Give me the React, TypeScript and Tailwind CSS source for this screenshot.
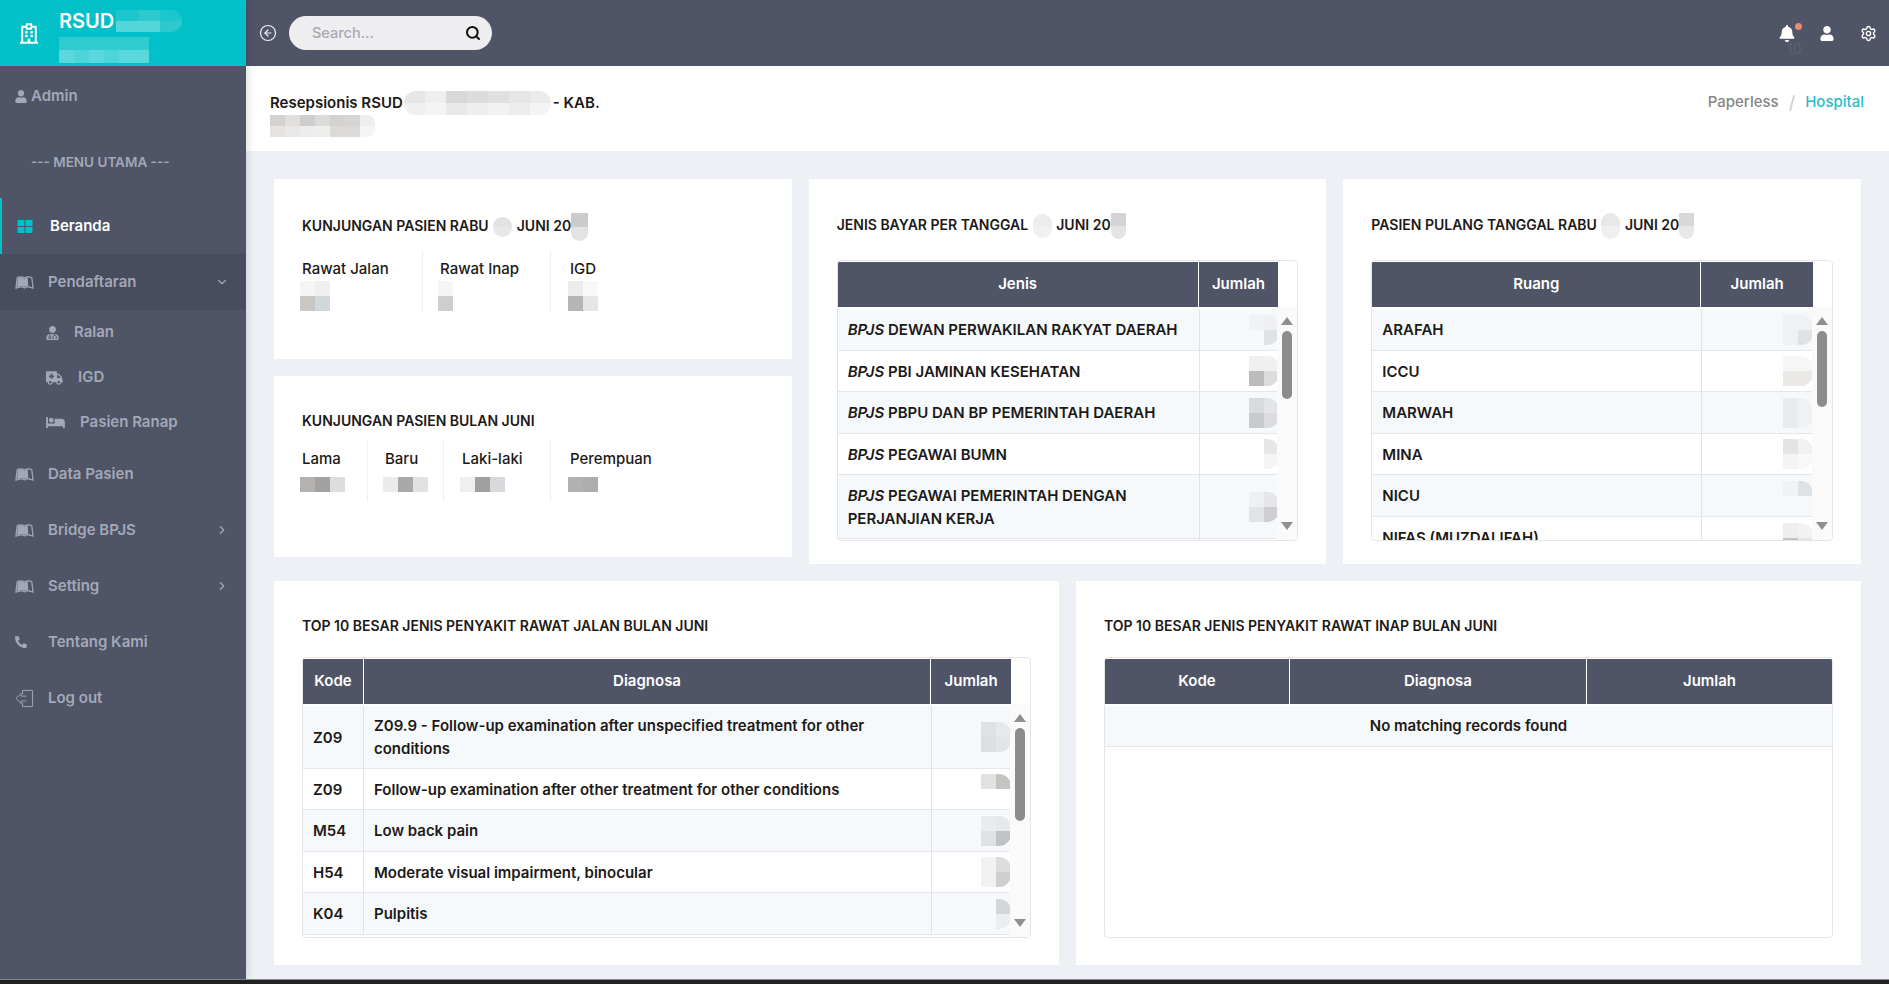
import {
  FaAmbulance,
  FaBed,
  FaBell,
  FaPhone,
  FaRegHospital,
  FaThLarge,
  FaUser,
  FaUserMd,
  FaLeanpub,
} from "react-icons/fa";
import { ChevronDown, ChevronRight, CircleArrowLeft, Search, Settings } from "lucide-react";
import type { ReactNode } from "react";

type Cell = string;

// pixelated redaction patch, rows of colour classes
function Pix({ rows, w = "w-[15px]", h = "h-[15px]", className = "" }: { rows: Cell[][]; w?: string; h?: string; className?: string }) {
  return (
    <span className={`inline-flex flex-col align-middle overflow-hidden ${className}`}>
      {rows.map((r, i) => (
        <span key={i} className="flex">
          {r.map((c, j) => (
            <span key={j} className={`${w} ${h} ${c}`} />
          ))}
        </span>
      ))}
    </span>
  );
}

const LogoutIcon = () => (
  <svg viewBox="0 0 20 20" className="w-[19px] h-[19px]" fill="none" stroke="currentColor" strokeWidth="1">
    <path d="M8 5.5V1.5h10.5v17H8V14.5" />
    <path d="M12 7.5H6.5V4.8L1 10l5.5 5.2v-2.7H12" />
  </svg>
);

function MenuRow({ icon, label, right, active, open }: { icon: ReactNode; label: string; right?: ReactNode; active?: boolean; open?: boolean }) {
  return (
    <div
      className={`h-[56px] flex items-center pl-[15px] pr-[17px] text-[15px] font-semibold ${
        active ? "border-l-2 border-[#01c0c8] pl-[13px] text-white" : "text-[#a3a8b7]"
      } ${open ? "bg-[#474c5f]" : ""}`}
    >
      <span className="w-[33px] flex items-center">{icon}</span>
      <span className="flex-1">{label}</span>
      {right}
    </div>
  );
}

function SubRow({ icon, label, gap }: { icon: ReactNode; label: string; gap: string }) {
  return (
    <div className="h-[45px] flex items-center pl-[46px] text-[15px] font-semibold text-[#a3a8b7]">
      <span className={`${gap} flex items-center`}>{icon}</span>
      <span>{label}</span>
    </div>
  );
}

function Sidebar() {
  const book = <FaLeanpub className="w-[19px] h-[19px]" />;
  return (
    <aside className="w-[246px] shrink-0 bg-[#4f5467] relative z-10 shadow-[2px_0_8px_rgba(0,0,0,0.12)] flex flex-col">
      <div className="h-[66px] bg-[#01c0c8] flex items-center pl-[20px] text-white">
        <FaRegHospital className="w-[18px] h-[21px] mr-[21px]" />
        <div className="flex flex-col">
          <div className="flex items-center h-[32px] mt-[1px]">
            <span className="text-[20px] font-semibold leading-none">RSUD</span>
            <Pix w="w-[22px]" h="h-[11px]" className="ml-[2px] rounded-r-xl" rows={[["bg-[#1cc6cd]", "bg-[#2ccacf]", "bg-[#1cc6cd]"], ["bg-[#55d6da]", "bg-[#55d6da]", "bg-[#2ccacf]"]]} />
          </div>
          <Pix className="rounded-r-lg" h="h-[13px]" rows={[["bg-[#2fcbd1]", "bg-[#2fcbd1]", "bg-[#30ccd2]", "bg-[#30ccd2]", "bg-[#2fcbd1]", "bg-[#30ccd2]"], ["bg-[#5ad8dc]", "bg-[#4fd5d9]", "bg-[#5ad8dc]", "bg-[#4fd5d9]", "bg-[#5ad8dc]", "bg-[#5ad8dc]"]]} />
        </div>
      </div>

      <div className="h-[58px] flex items-center pl-[15px] gap-[4px] text-[15px] font-semibold text-[#a3a8b7] mt-[1px]">
        <FaUser className="w-[12px] h-[13px]" />
        Admin
      </div>
      <div className="h-[72px] flex items-center justify-start pl-[31px] text-[13.5px] font-semibold text-[#a3a8b7] mt-[1px]">--- MENU UTAMA ---</div>

      <MenuRow active icon={<FaThLarge className="w-[16px] h-[15px] text-[#01c0c8]" />} label="Beranda" />
      <MenuRow open icon={book} label="Pendaftaran" right={<ChevronDown className="w-[14px] h-[14px] mr-[0px]" />} />
      <div className="pt-[0px]">
        <SubRow gap="w-[28px]" icon={<FaUserMd className="w-[13px] h-[14px]" />} label="Ralan" />
        <SubRow gap="w-[32px]" icon={<FaAmbulance className="w-[17px] h-[14px]" />} label="IGD" />
        <SubRow gap="w-[34px]" icon={<FaBed className="w-[19px] h-[15px]" />} label="Pasien Ranap" />
      </div>
      <div className="mt-[1px]">
        <MenuRow icon={book} label="Data Pasien" />
        <MenuRow icon={book} label="Bridge BPJS" right={<ChevronRight className="w-[14px] h-[14px]" />} />
        <MenuRow icon={book} label="Setting" right={<ChevronRight className="w-[14px] h-[14px]" />} />
        <MenuRow icon={<FaPhone className="w-[12px] h-[12px] scale-x-[-1]" />} label="Tentang Kami" />
        <MenuRow icon={<LogoutIcon />} label="Log out" />
      </div>
    </aside>
  );
}

function Topbar() {
  return (
    <header className="h-[66px] bg-[#4f5467] flex items-center pl-[13px] pr-[12px] text-white">
      <CircleArrowLeft className="w-[18px] h-[18px] text-[#f0f0f0]" strokeWidth={1.6} />
      <div className="ml-[12px] w-[203px] h-[34px] rounded-full bg-[#eeeef1] flex items-center pl-[23px] pr-[11px]">
        <span className="flex-1 text-[14.5px] font-medium text-[#a9a9b2]">Search...</span>
        <Search className="w-[16px] h-[16px] text-[#111]" strokeWidth={3} />
      </div>
      <div className="ml-auto flex items-center">
        <div className="relative w-[18px] h-[18px] flex items-center justify-center">
          <FaBell className="w-[16px] h-[17px]" />
          <span className="absolute -top-[1px] -right-[6px] w-[7px] h-[7px] rounded-full bg-[#e98b73]" />
          <span className="absolute top-[14px] left-[9px] text-[14px] font-medium text-[#5a5f72]">10</span>
        </div>
        <FaUser className="w-[14px] h-[15px] ml-[24px]" />
        <Settings className="w-[17px] h-[17px] ml-[26px]" strokeWidth={2} />
      </div>
    </header>
  );
}

const Title = ({ children }: { children: ReactNode }) => (
  <h4 className="text-[14px] font-semibold text-[#1c1917] leading-[21px] whitespace-nowrap">{children}</h4>
);

function StatCol({ label, w, pl, last, rows, pw }: { label: string; w: string; pl: string; last?: boolean; rows: Cell[][]; pw?: string }) {
  return (
    <div className={`${w} ${pl} h-[62px] ${last ? "" : "border-r border-[#eeeff2]"}`}>
      <div className="text-[15px] font-medium text-[#1c1917] leading-[23px] mt-[7px] whitespace-nowrap">{label}</div>
      <Pix className="-ml-[2px] mt-[1px]" w={pw} rows={rows} />
    </div>
  );
}

const gray = {
  a: "bg-[#f5f5f5]",
  b: "bg-[#f0f0f0]",
  c: "bg-[#c8c7c4]",
  d: "bg-[#d2d7d9]",
  e: "bg-[#b3b2af]",
  f: "bg-[#a2a1a0]",
  g: "bg-[#dcdddd]",
  h: "bg-[#ececec]",
};

// scrollbar beside a table body
function ScrollBar({ thumb }: { thumb: string }) {
  return (
    <div className="w-[20px] shrink-0 bg-[#fafafa] flex flex-col items-center relative">
      <span className="mt-[10px] w-0 h-0 border-x-[6px] border-x-transparent border-b-[8px] border-b-[#8f8f8f]" />
      <span className={`mt-[6px] w-[10px] rounded-full bg-[#8c8c8c] ${thumb}`} />
      <span className="absolute bottom-[10px] w-0 h-0 border-x-[6px] border-x-transparent border-t-[8px] border-t-[#8f8f8f]" />
    </div>
  );
}

type Row = { h: string; cells: ReactNode[] };

function DataTable({ cols, heads, rows, thumb, jumlah }: { cols: string[]; heads: string[]; rows: Row[]; thumb: string; jumlah: ReactNode[] }) {
  return (
    <div className="mt-[21px] h-[281px] border border-[#e3e5e8] rounded-[4px] overflow-hidden flex flex-col">
      <div className="flex pr-[19px] pt-[1px] shrink-0">
        {heads.map((t, i) => (
          <div key={t} className={`${cols[i]} h-[45px] bg-[#4f5467] text-white text-[15px] font-semibold flex items-center justify-center ${i < heads.length - 1 ? "border-r border-white" : ""}`}>
            {t}
          </div>
        ))}
      </div>
      <div className="flex flex-1 min-h-0">
        <div className="flex-1 min-w-0 overflow-hidden pt-[2px]">
          {rows.map((r, i) => (
            <div key={i} className={`flex ${r.h} border-b border-[#e4e6ea] ${i % 2 === 0 ? "bg-[#f6f9fc]" : "bg-white"}`}>
              {r.cells.map((c, j) => (
                <div key={j} className={`${cols[j]} shrink-0 px-[10px] flex items-center text-[15px] font-semibold text-[#1c1917] leading-[23px] border-r border-[#e0e2e6]`}>
                  {c}
                </div>
              ))}
              <div className={`${cols[r.cells.length]} shrink-0 flex items-center justify-end pr-[1px]`}>{jumlah[i]}</div>
            </div>
          ))}
        </div>
        <ScrollBar thumb={thumb} />
      </div>
    </div>
  );
}

const Bpjs = ({ t }: { t: string }) => (
  <span>
    <em className="italic">BPJS</em> {t}
  </span>
);

const Blob = ({ c1, c2, c3, c4 }: { c1: string; c2: string; c3: string; c4: string }) => (
  <Pix className="rounded-r-xl" rows={[[c1, c2], [c3, c4]]} />
);

const jumlahA = [
  <Blob c1="bg-[#f0f2f5]" c2="bg-[#eef0f3]" c3="bg-[#f6f9fc]" c4="bg-[#dfe2e5]" />,
  <Blob c1="bg-[#f0f0f0]" c2="bg-[#f0f0f0]" c3="bg-[#bcbcbc]" c4="bg-[#dcdcdc]" />,
  <Blob c1="bg-[#d8dade]" c2="bg-[#e2e4e7]" c3="bg-[#c8cacd]" c4="bg-[#dadcdf]" />,
  <Blob c1="bg-white" c2="bg-[#e6e6e6]" c3="bg-white" c4="bg-[#f5f5f5]" />,
  <Blob c1="bg-[#eef0f3]" c2="bg-[#e4e6e9]" c3="bg-[#e1e3e6]" c4="bg-[#ccced1]" />,
  null,
];

const jumlahB = [
  <Blob c1="bg-[#eff1f4]" c2="bg-[#eff1f4]" c3="bg-[#eff1f4]" c4="bg-[#dde2e6]" />,
  <Blob c1="bg-[#f6f6f6]" c2="bg-[#f6f6f6]" c3="bg-[#ebe9e6]" c4="bg-[#ebe9e6]" />,
  <Blob c1="bg-[#e9ebee]" c2="bg-[#eff1f4]" c3="bg-[#e9ebee]" c4="bg-[#eff1f4]" />,
  <Blob c1="bg-[#e6e4e3]" c2="bg-[#f0f1f2]" c3="bg-[#f4f4f4]" c4="bg-[#f8f8f8]" />,
  <Blob c1="bg-[#f0f2f5]" c2="bg-[#dde2e6]" c3="bg-[#f6f9fc]" c4="bg-[#f6f9fc]" />,
  <Blob c1="bg-[#eeeeee]" c2="bg-[#f2f2f2]" c3="bg-[#c4c4c4]" c4="bg-[#e6e6e6]" />,
];

const jumlahC = [
  <Blob c1="bg-[#dfe1e4]" c2="bg-[#e6e8eb]" c3="bg-[#dcdee1]" c4="bg-[#e2e4e7]" />,
  <Blob c1="bg-[#e2e2e0]" c2="bg-[#c4c4c2]" c3="bg-white" c4="bg-white" />,
  <Blob c1="bg-[#e9ebee]" c2="bg-[#e6e8eb]" c3="bg-[#dfe1e4]" c4="bg-[#bfc3c6]" />,
  <Blob c1="bg-[#f2f2f2]" c2="bg-[#dcdcdc]" c3="bg-[#f2f2f2]" c4="bg-[#cfcfcf]" />,
  <Blob c1="bg-[#f6f9fc]" c2="bg-[#d4d6d9]" c3="bg-[#f6f9fc]" c4="bg-[#ebedf0]" />,
];

export default function App() {
  return (
    <div className="w-[1889px] h-[984px] overflow-hidden bg-[#edf0f5] flex flex-col font-[Inter,sans-serif]">
      <div className="flex flex-1 min-h-0">
        <Sidebar />
        <div className="flex-1 min-w-0 flex flex-col">
          <Topbar />
          <div className="h-[85px] bg-white flex justify-between pl-[24px] pr-[25px] pt-[25px]">
            <div className="text-[15px] font-semibold text-[#1c1917] leading-[22px]">
              <div className="flex items-center">
                Resepsionis RSUD
                <Pix className="ml-[1px] rounded-full" w="w-[21px]" h="h-[12px]" rows={[["bg-[#e6e6e6]", "bg-[#efefef]", "bg-[#d8d8d8]", "bg-[#dcdcdc]", "bg-[#e0e0e0]", "bg-[#e6e6e6]", "bg-[#ececec]"], ["bg-[#f0f0f0]", "bg-[#f4f4f4]", "bg-[#e8e8e8]", "bg-[#eeeeee]", "bg-[#f2f2f2]", "bg-[#ececec]", "bg-[#f4f4f4]"]]} />
                <span className="ml-[2px]">- KAB.</span>
              </div>
              <Pix className="-mt-[2px] rounded-r-lg" h="h-[11px]" rows={[["bg-[#d4d2d1]", "bg-[#e0dfde]", "bg-[#cfcecd]", "bg-[#dcdbda]", "bg-[#d3d2d1]", "bg-[#d6d5d4]", "bg-[#eeeeee]"], ["bg-[#e6e4e3]", "bg-[#e9e8e7]", "bg-[#ededed]", "bg-[#eeeeec]", "bg-[#dbdad9]", "bg-[#dbdad9]", "bg-[#f5f5f5]"]]} />
            </div>
            <div className="text-[15px] font-medium h-[22px] flex items-center">
              <span className="text-[#868686]">Paperless</span>
              <span className="text-[#c9c9c9] mx-[10px] text-[18px] font-normal">/</span>
              <span className="text-[#2bbcc6]">Hospital</span>
            </div>
          </div>

          <main className="flex-1 pt-[28px] pl-[28px] pr-[28px] flex flex-col gap-[17px]">
            <div className="grid grid-cols-3 gap-[17px]">
              <div className="flex flex-col gap-[17px]">
                <section className="h-[180px] bg-white px-[28px] pt-[34px]">
                  <Title>
                    KUNJUNGAN PASIEN RABU <Pix className="rounded-full mx-[1px]" h="h-[10px]" w="w-[19px]" rows={[["bg-[#e2e2e2]"], ["bg-[#e8e8e8]"]]} /> JUNI 20
                    <Pix h="h-[14px]" w="w-[17px]" className="rounded-b-xl" rows={[["bg-[#cdcccb]"], ["bg-[#e3e3e3]"]]} />
                  </Title>
                  <div className="flex mt-[9px]">
                    <StatCol label="Rawat Jalan" w="w-[121px]" pl="" rows={[[gray.a, gray.b], [gray.c, gray.d]]} />
                    <StatCol label="Rawat Inap" w="w-[128px]" pl="pl-[17px]" pw="w-[15px]" rows={[[gray.a], ["bg-[#cfcdce]"]]} />
                    <StatCol label="IGD" w="w-[100px]" pl="pl-[19px]" last rows={[[gray.h, "bg-[#f8f8f8]"], ["bg-[#b5b5b5]", "bg-[#e5e5e7]"]]} />
                  </div>
                </section>
                <section className="h-[181px] bg-white px-[28px] pt-[34px]">
                  <Title>KUNJUNGAN PASIEN BULAN JUNI</Title>
                  <div className="flex mt-[9px]">
                    <StatCol label="Lama" w="w-[66px]" pl="" rows={[[gray.e, gray.f, gray.g]]} />
                    <StatCol label="Baru" w="w-[76px]" pl="pl-[17px]" rows={[["bg-[#ebebeb]", "bg-[#a9a9ab]", "bg-[#e2e2e2]"]]} />
                    <StatCol label="Laki-laki" w="w-[107px]" pl="pl-[18px]" rows={[["bg-[#efefef]", "bg-[#a0a0a0]", "bg-[#d8d9dc]"]]} />
                    <StatCol label="Perempuan" w="w-[120px]" pl="pl-[19px]" last rows={[["bg-[#b1b1b1]", "bg-[#adadad]"]]} />
                  </div>
                </section>
              </div>

              <section className="h-[385px] bg-white px-[28px] pt-[34px]">
                <Title>
                  JENIS BAYAR PER TANGGAL <Pix className="rounded-full mx-[1px]" h="h-[12px]" w="w-[19px]" rows={[["bg-[#ececec]"], ["bg-[#f0f0f0]"]]} /> JUNI 20
                  <Pix h="h-[13px]" w="w-[15px]" className="rounded-b-xl" rows={[["bg-[#d4d4d4]"], ["bg-[#e4e4e4]"]]} />
                </Title>
                <DataTable
                  cols={["w-[362px]", "w-[80px]"]}
                  heads={["Jenis", "Jumlah"]}
                  thumb="h-[68px]"
                  jumlah={jumlahA}
                  rows={[
                    { h: "h-[42px]", cells: [<Bpjs t="DEWAN PERWAKILAN RAKYAT DAERAH" />] },
                    { h: "h-[41px]", cells: [<Bpjs t="PBI JAMINAN KESEHATAN" />] },
                    { h: "h-[42px]", cells: [<Bpjs t="PBPU DAN BP PEMERINTAH DAERAH" />] },
                    { h: "h-[41px]", cells: [<Bpjs t="PEGAWAI BUMN" />] },
                    { h: "h-[64px]", cells: [<Bpjs t="PEGAWAI PEMERINTAH DENGAN PERJANJIAN KERJA" />] },
                    { h: "h-[42px]", cells: [<span />] },
                  ]}
                />
              </section>

              <section className="h-[385px] bg-white px-[28px] pt-[34px]">
                <Title>
                  PASIEN PULANG TANGGAL RABU <Pix className="rounded-full mx-[1px]" h="h-[13px]" w="w-[19px]" rows={[["bg-[#e8e8e8]"], ["bg-[#efefef]"]]} /> JUNI 20
                  <Pix h="h-[13px]" w="w-[15px]" className="rounded-b-xl" rows={[["bg-[#d8d8d8]"], ["bg-[#e8e8e8]"]]} />
                </Title>
                <DataTable
                  cols={["w-[330px]", "w-[112px]"]}
                  heads={["Ruang", "Jumlah"]}
                  thumb="h-[76px]"
                  jumlah={jumlahB}
                  rows={[
                    { h: "h-[42px]", cells: ["ARAFAH"] },
                    { h: "h-[41px]", cells: ["ICCU"] },
                    { h: "h-[42px]", cells: ["MARWAH"] },
                    { h: "h-[41px]", cells: ["MINA"] },
                    { h: "h-[42px]", cells: ["NICU"] },
                    { h: "h-[42px]", cells: ["NIFAS (MUZDALIFAH)"] },
                  ]}
                />
              </section>
            </div>

            <div className="grid grid-cols-2 gap-[17px]">
              <section className="h-[384px] bg-white px-[28px] pt-[34px]">
                <Title>TOP 10 BESAR JENIS PENYAKIT RAWAT JALAN BULAN JUNI</Title>
                <DataTable
                  cols={["w-[61px]", "w-[568px]", "w-[80px]"]}
                  heads={["Kode", "Diagnosa", "Jumlah"]}
                  thumb="h-[93px]"
                  jumlah={jumlahC}
                  rows={[
                    { h: "h-[63px]", cells: ["Z09", "Z09.9 - Follow-up examination after unspecified treatment for other conditions"] },
                    { h: "h-[41px]", cells: ["Z09", "Follow-up examination after other treatment for other conditions"] },
                    { h: "h-[42px]", cells: ["M54", "Low back pain"] },
                    { h: "h-[41px]", cells: ["H54", "Moderate visual impairment, binocular"] },
                    { h: "h-[42px]", cells: ["K04", "Pulpitis"] },
                  ]}
                />
              </section>

              <section className="h-[384px] bg-white px-[28px] pt-[34px]">
                <Title>TOP 10 BESAR JENIS PENYAKIT RAWAT INAP BULAN JUNI</Title>
                <div className="mt-[21px] h-[281px] border border-[#e3e5e8] rounded-[4px] overflow-hidden">
                  <div className="flex pt-[1px]">
                    <div className="w-[185px] h-[45px] bg-[#4f5467] text-white text-[15px] font-semibold flex items-center justify-center border-r border-white">Kode</div>
                    <div className="w-[297px] h-[45px] bg-[#4f5467] text-white text-[15px] font-semibold flex items-center justify-center border-r border-white">Diagnosa</div>
                    <div className="flex-1 h-[45px] bg-[#4f5467] text-white text-[15px] font-semibold flex items-center justify-center">Jumlah</div>
                  </div>
                  <div className="mt-[2px] h-[41px] bg-[#f6f9fc] border-b border-[#e4e6ea] flex items-center justify-center text-[15px] font-semibold text-[#1c1917]">No matching records found</div>
                </div>
              </section>
            </div>
          </main>
        </div>
      </div>
      <div className="h-[5px] bg-[#222222] border-t border-[#8a8a8a] shrink-0" />
    </div>
  );
}
